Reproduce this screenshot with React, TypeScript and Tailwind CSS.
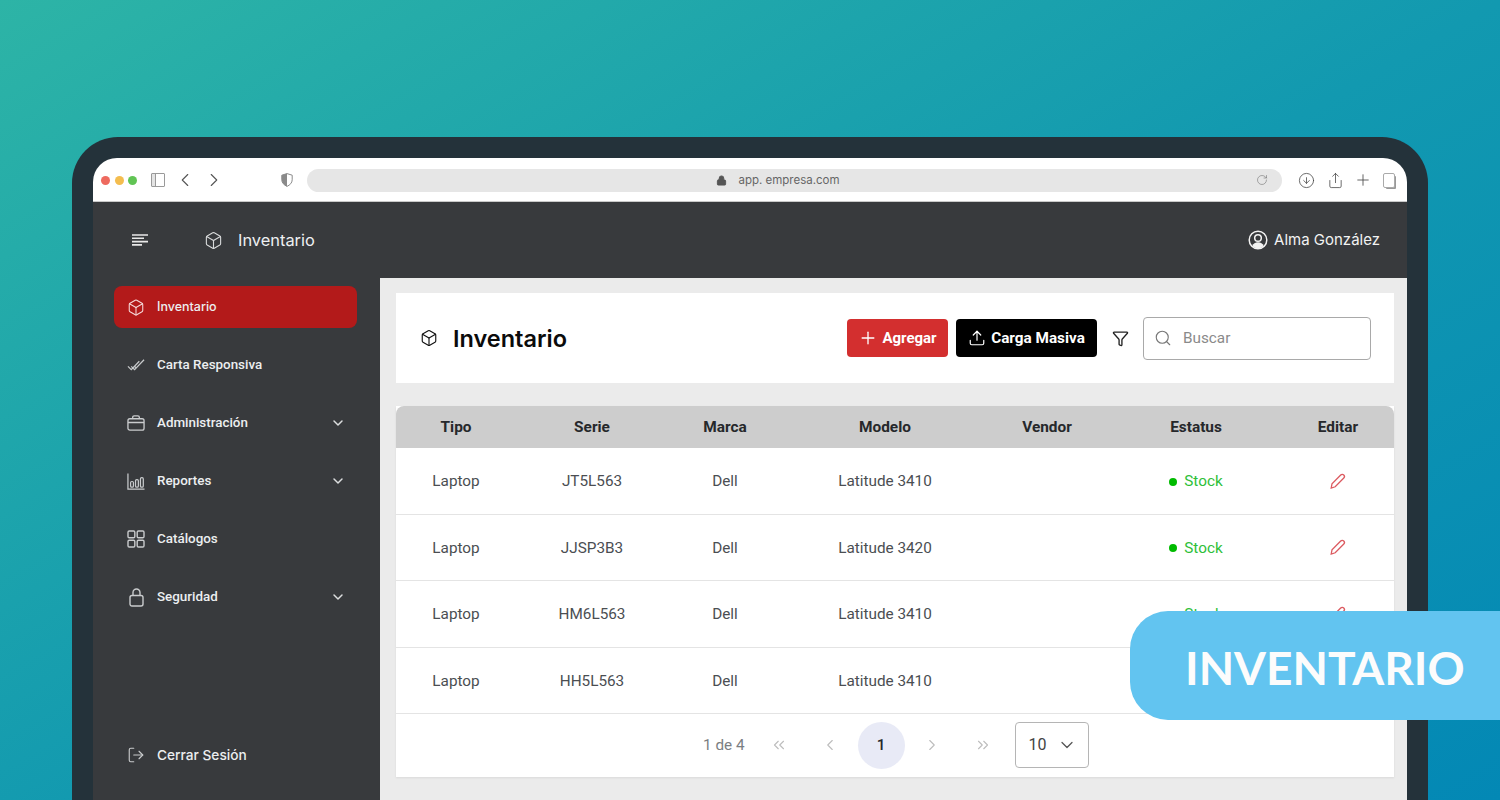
import {
  Box,
  ChevronDown,
  ChevronLeft,
  ChevronRight,
  ChevronsLeft,
  ChevronsRight,
  CircleArrowDown,
  Funnel,
  Lock,
  LogOut,
  Plus,
  RotateCw,
  Search,
  Share,
  Upload,
} from 'lucide-react';
import type { ReactNode } from 'react';

const roboto = 'font-["Roboto",sans-serif]';
const display = 'font-["Inter",sans-serif]';

const rows = [
  { tipo: 'Laptop', serie: 'JT5L563', marca: 'Dell', modelo: 'Latitude 3410' },
  { tipo: 'Laptop', serie: 'JJSP3B3', marca: 'Dell', modelo: 'Latitude 3420' },
  { tipo: 'Laptop', serie: 'HM6L563', marca: 'Dell', modelo: 'Latitude 3410' },
  { tipo: 'Laptop', serie: 'HH5L563', marca: 'Dell', modelo: 'Latitude 3410' },
];

const columns = 'grid grid-cols-[120px_152px_114px_206px_118px_180px_104px] items-center text-center';

function DoubleCheck() {
  return (
    <svg width="19" height="18" viewBox="0 0 19 18" fill="none" stroke="#c9cbcd" strokeWidth="1.3">
      <path d="M1 10.500l3.500 3.500L13 5M4.500 10.500l3.500 3.500L18 3.500M8 10.500l1.200 1.200" />
    </svg>
  );
}

function Suitcase() {
  return (
    <svg width="19" height="18" viewBox="0 0 19 18" fill="none" stroke="#c9cbcd" strokeWidth="1.400">
      <rect x="1" y="4.500" width="17" height="12" rx="2" />
      <path d="M6 4.500V3a1.500 1.500 0 0 1 1.500-1.500h4A1.500 1.500 0 0 1 13 3v1.500M1 8.500h17" />
    </svg>
  );
}

function Bars() {
  return (
    <svg width="19" height="19" viewBox="0 0 19 19" fill="none" stroke="#c9cbcd" strokeWidth="1.300">
      <path d="M1 1v16.500h17.500" />
      <rect x="3.800" y="9.500" width="3" height="6" rx="1.300" />
      <rect x="9" y="7.500" width="3" height="8" rx="1.300" />
      <rect x="14.200" y="5.500" width="3" height="10" rx="1.300" />
    </svg>
  );
}

function Tiles() {
  return (
    <svg width="18" height="18" viewBox="0 0 18 18" fill="none" stroke="#c9cbcd" strokeWidth="1.400">
      <rect x="1" y="1" width="6.800" height="6.800" rx="1.200" />
      <rect x="10.200" y="1" width="6.800" height="6.800" rx="1.200" />
      <rect x="1" y="10.200" width="6.800" height="6.800" rx="1.200" />
      <rect x="10.200" y="10.200" width="6.800" height="6.800" rx="1.200" />
    </svg>
  );
}

function Padlock() {
  return (
    <svg width="15" height="19" viewBox="0 0 15 19" fill="none" stroke="#c9cbcd" strokeWidth="1.400">
      <rect x="1" y="7.500" width="13" height="10.500" rx="2" />
      <path d="M4 7.500V4.500a3.500 3.500 0 0 1 7 0v3" />
    </svg>
  );
}

function ShieldHalf() {
  return (
    <svg width="12" height="14" viewBox="0 0 12 14">
      <path d="M6 .6l5.200 1.600v4.600c0 3-2.200 5.200-5.200 6.600C3 12 .8 9.800.8 6.800V2.200z" fill="#fff" stroke="#8a8a8a" />
      <path d="M6 .6L.8 2.200v4.600C.8 9.800 3 12 6 13.400z" fill="#8a8a8a" />
    </svg>
  );
}

function UserBadge() {
  return (
    <svg width="20" height="20" viewBox="0 0 20 20" className="ml-auto">
      <circle cx="10" cy="10" r="8.800" fill="none" stroke="#f2f2f2" strokeWidth="1.500" />
      <circle cx="10" cy="8" r="3.300" fill="none" stroke="#f2f2f2" strokeWidth="1.500" />
      <path d="M4.300 16c1-2.600 3-3.700 5.700-3.700s4.700 1.100 5.700 3.700c-1.500 1.500-3.500 2.300-5.700 2.300S5.800 17.500 4.300 16z" fill="#f2f2f2" />
    </svg>
  );
}

function SlimPencil() {
  return (
    <svg width="18" height="18" viewBox="0 0 18 18" fill="none" stroke="#dc5a60" strokeWidth="1.300" className="-translate-y-px">
      <path d="M2.200 16l.8-4.200 8.700-8.800a2.100 2.100 0 0 1 3.100 3L6.200 14.800z" />
    </svg>
  );
}

function NavItem({
  icon,
  label,
  active,
  expandable,
  labelClass,
}: {
  icon: ReactNode;
  label: string;
  active?: boolean;
  expandable?: boolean;
  labelClass?: string;
}) {
  return (
    <div
      className={`flex h-[42px] items-center rounded-lg pl-[13px] pr-[11px] ${active ? 'bg-[#b31a1a]' : ''}`}
    >
      <span className="flex w-[18px] justify-center">{icon}</span>
      <span className={`ml-[12px] flex-1 text-[#eceef0] ${labelClass ?? `${roboto} text-[13.400px] font-medium`}`}>
        {label}
      </span>
      {expandable && <ChevronDown size={16} strokeWidth={2.200} className="text-[#dcdedf]" />}
    </div>
  );
}

function BrowserBar() {
  return (
    <div className="flex h-[44px] shrink-0 items-center border-b border-[#c9c9c9] bg-white pl-[8px] pr-[7px] pt-[1px]">
      <div className="flex w-[37px] shrink-0 gap-[4.500px]">
        <span className="size-[9px] rounded-full bg-[#ee6a5f]" />
        <span className="size-[9px] rounded-full bg-[#f4bd4f]" />
        <span className="size-[9px] rounded-full bg-[#61c454]" />
      </div>
      <div className="ml-[13px] flex h-[14px] w-[14px] shrink-0 rounded-[1px] border border-[#9a9a9a]">
        <span className="w-[4px] border-r border-[#9a9a9a] bg-[#e4e4e4]" />
      </div>
      <ChevronLeft size={22} strokeWidth={1.200} className="ml-[9px] shrink-0 text-[#555]" />
      <ChevronRight size={22} strokeWidth={1.200} className="ml-[7px] shrink-0 text-[#555]" />
      <span className="ml-[56px] flex shrink-0">
        <ShieldHalf />
      </span>
      <div className="ml-[14px] flex h-[23px] w-[975px] shrink-0 items-center rounded-full bg-[#e6e6e6] pr-[14px]">
        <div className="flex flex-1 items-center justify-center gap-[11px] pr-[7px]">
          <Lock size={11} className="fill-[#555] text-[#555]" />
          <span className={`${display} pt-[1px] text-[11.500px] text-[#666]`}>app. empresa.com</span>
        </div>
        <RotateCw size={12} strokeWidth={1.200} className="text-[#777]" />
      </div>
      <CircleArrowDown size={17} strokeWidth={1.100} className="ml-[16px] shrink-0 text-[#444]" />
      <Share size={17} strokeWidth={1.100} className="ml-[12px] shrink-0 text-[#444]" />
      <Plus size={18} strokeWidth={1.100} className="ml-[10px] shrink-0 text-[#444]" />
      <span className="ml-[11px] h-[15px] w-[12px] shrink-0 rounded-[2px] border border-[#aaa] bg-white shadow-[2px_2px_0_-1px_#999]" />
    </div>
  );
}

function Sidebar() {
  return (
    <aside className="flex w-[287px] shrink-0 flex-col bg-[#383a3d] pb-[24px] pl-[21px] pr-[23px] pt-[8px]">
      <div className="flex flex-col gap-[16px]">
        <NavItem
          active
          label="Inventario"
          labelClass={`${display} text-[12.500px] font-medium`}
          icon={<Box size={19} strokeWidth={1.400} className="text-[#f6dada]" />}
        />
        <NavItem label="Carta Responsiva" icon={<DoubleCheck />} />
        <NavItem expandable label="Administración" icon={<Suitcase />} />
        <NavItem expandable label="Reportes" icon={<Bars />} />
        <NavItem label="Catálogos" icon={<Tiles />} />
        <NavItem expandable label="Seguridad" icon={<Padlock />} />
      </div>
      <div className="mt-auto">
        <NavItem
          label="Cerrar Sesión"
          labelClass={`${display} text-[13.700px] font-medium`}
          icon={<LogOut size={18} strokeWidth={1.500} className="text-[#c9cbcd]" />}
        />
      </div>
    </aside>
  );
}

function Toolbar() {
  return (
    <div className="flex h-[90px] items-center bg-white pl-[24px] pr-[23px]">
      <Box size={18} strokeWidth={1.500} className="text-[#111]" />
      <h1 className={`${display} ml-[15px] pt-[1px] text-[23.500px] font-semibold text-[#0b0b0b]`}>Inventario</h1>
      <button className="ml-auto flex h-[38px] w-[101px] items-center justify-center gap-[4px] rounded bg-[#d32f2f] text-white">
        <Plus size={20} strokeWidth={1.600} />
        <span className={`${roboto} text-[15px] font-bold`}>Agregar</span>
      </button>
      <button className="ml-[8px] flex h-[38px] w-[141px] items-center justify-center gap-[5px] rounded bg-black text-white">
        <Upload size={18} strokeWidth={1.600} />
        <span className={`${roboto} text-[15.300px] font-bold`}>Carga Masiva</span>
      </button>
      <Funnel size={17} strokeWidth={1.900} className="ml-[14.500px] text-[#222]" />
      <div className="ml-[14.500px] flex h-[43px] w-[228px] items-center rounded border border-[#a9a9a9] pl-[10px]">
        <Search size={18} strokeWidth={1.500} className="text-[#777]" />
        <span className={`${roboto} ml-[11px] text-[15.300px] text-[#8a8a8a]`}>Buscar</span>
      </div>
    </div>
  );
}

function InventoryTable() {
  return (
    <div className="mt-[23px] bg-white shadow-[0_1px_2px_rgba(0,0,0,0.08)]">
      <div className={`${columns} ${roboto} h-[42px] rounded-t-lg bg-[#cdcdcd] pt-[2px] text-[15.400px] font-bold text-[#26282b]`}>
        <span>Tipo</span>
        <span>Serie</span>
        <span>Marca</span>
        <span>Modelo</span>
        <span>Vendor</span>
        <span>Estatus</span>
        <span>Editar</span>
      </div>
      {rows.map((row) => (
        <div
          key={row.serie}
          className={`${columns} ${roboto} h-[66.500px] border-b border-[#e4e4e4] pt-[2px] text-[15.300px] text-[#4b4e52]`}
        >
          <span>{row.tipo}</span>
          <span>{row.serie}</span>
          <span>{row.marca}</span>
          <span>{row.modelo}</span>
          <span />
          <span className="flex items-center justify-center gap-[7px] text-[#2fbf3a]">
            <span className="size-[8px] rounded-full bg-[#00bb00]" />
            Stock
          </span>
          <span className="flex justify-center">
            <SlimPencil />
          </span>
        </div>
      ))}
      <div className={`${roboto} flex h-[63px] items-center pb-[1px] pl-[307px] text-[15.300px]`}>
        <span className="mr-[11px] text-[#7b7e82]">1 de 4</span>
        <div className="flex items-center gap-[4px] text-[#bdbdbd]">
          <span className="flex size-[47px] items-center justify-center">
            <ChevronsLeft size={18} strokeWidth={1.500} />
          </span>
          <span className="flex size-[47px] items-center justify-center">
            <ChevronLeft size={18} strokeWidth={1.500} />
          </span>
          <span className="flex size-[47px] items-center justify-center rounded-full bg-[#e8eaf6] font-medium text-[#26282b]">
            1
          </span>
          <span className="flex size-[47px] items-center justify-center">
            <ChevronRight size={18} strokeWidth={1.500} />
          </span>
          <span className="flex size-[47px] items-center justify-center">
            <ChevronsRight size={18} strokeWidth={1.500} />
          </span>
        </div>
        <div className="ml-[8px] flex h-[46px] w-[74px] items-center rounded border border-[#b5b5b5] pl-[13px] text-[#444]">
          <span className="text-base">10</span>
          <ChevronDown size={20} strokeWidth={1.500} className="ml-[10px] text-[#555]" />
        </div>
      </div>
    </div>
  );
}

export default function App() {
  return (
    <div className="relative h-[800px] w-[1500px] overflow-hidden bg-[linear-gradient(150deg,#2db4a6_0%,#1299b0_52%,#0388b5_100%)] pl-[72px] pt-[137px]">
      <div className="h-[663px] w-[1356px] rounded-t-[46px] bg-[#24323a] px-[21px] pt-[21px]">
        <div className="flex h-[642px] flex-col overflow-hidden rounded-t-[24px]">
          <BrowserBar />
          <header className="flex h-[76px] shrink-0 items-center bg-[#383a3d] pl-[38px] pr-[27px] text-white">
            <svg width="18" height="12" viewBox="0 0 18 12" stroke="#e8e8e8" strokeWidth="1.600">
              <path d="M1 1h16M1 4.300h12M1 7.600h16M1 10.900h10" />
            </svg>
            <Box size={19} strokeWidth={1.400} className="ml-[55px] text-[#d8dadb]" />
            <span className={`${display} ml-[15px] text-[16.400px] text-[#eef0f2]`}>Inventario</span>
            <UserBadge />
            <span className={`${display} ml-[6px] text-[15px] text-[#f2f2f2]`}>Alma González</span>
          </header>
          <div className="flex min-h-0 flex-1">
            <Sidebar />
            <main className="flex-1 bg-[#ebebeb] pl-4 pr-[13px] pt-[15px]">
              <Toolbar />
              <InventoryTable />
            </main>
          </div>
        </div>
      </div>
      <div className="absolute left-[1130px] top-[611px] flex h-[109px] w-[370px] items-center rounded-l-[38px] bg-[#62c4f0] pl-[55px] pt-[3px]">
        <span className='font-["Lato",sans-serif] text-[46px] font-bold text-[#fcfcfc]'>INVENTARIO</span>
      </div>
    </div>
  );
}
